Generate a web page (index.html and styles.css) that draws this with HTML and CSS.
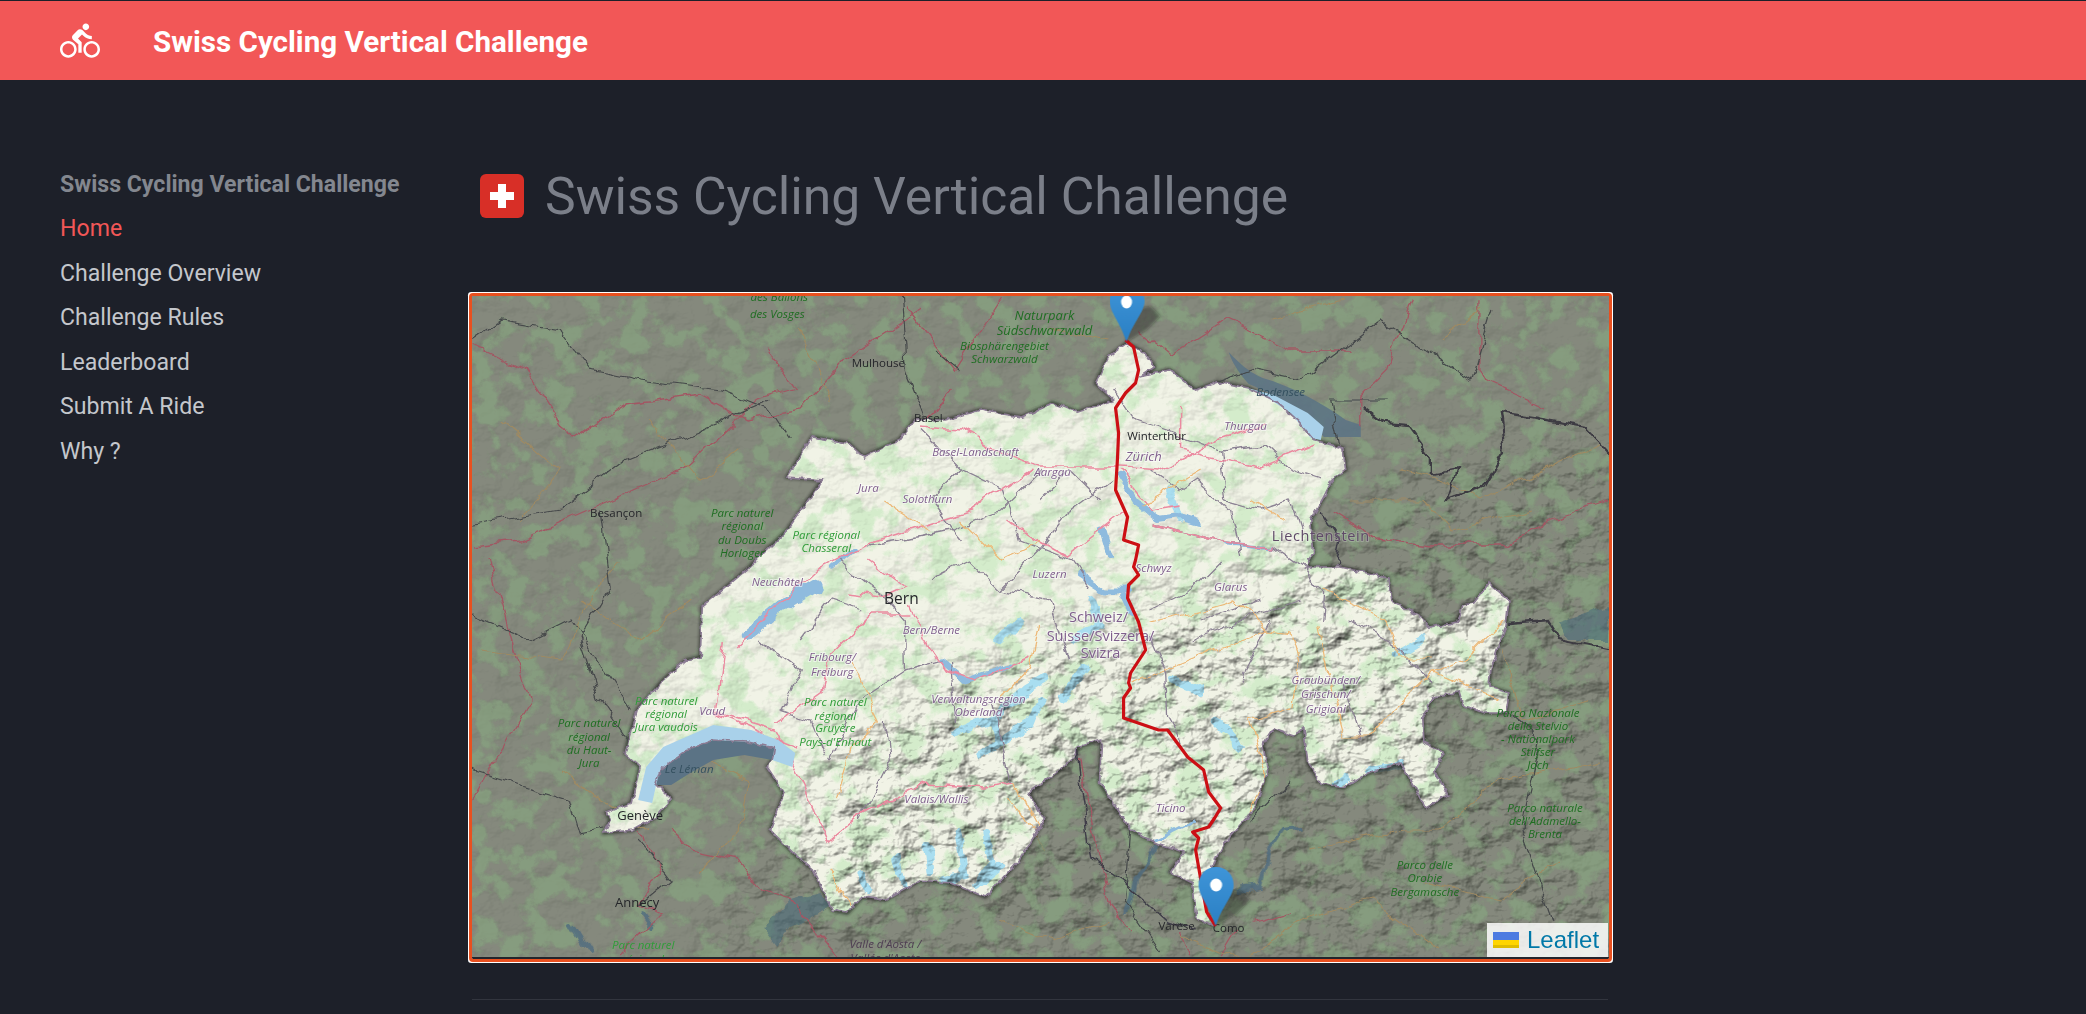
FILE: index.html
```html
<!DOCTYPE html>
<html lang="en">
<head>
<meta charset="utf-8">
<title>Swiss Cycling Vertical Challenge</title>
<link rel="stylesheet" href="styles.css">
</head>
<body>
<header class="topbar">
  <svg class="bike" viewBox="0 0 24 24" aria-hidden="true"><path d="M15.5 5.5c1.1 0 2-.9 2-2s-.9-2-2-2-2 .9-2 2 .9 2 2 2zM5 12c-2.8 0-5 2.2-5 5s2.2 5 5 5 5-2.2 5-5-2.2-5-5-5zm0 8.5c-1.9 0-3.5-1.6-3.5-3.5s1.6-3.5 3.5-3.5 3.5 1.6 3.5 3.5-1.6 3.5-3.5 3.5zm5.8-10l2.4-2.4.8.8c1.3 1.3 3 2.1 5.1 2.1V9c-1.5 0-2.7-.6-3.6-1.5l-1.9-1.9c-.5-.4-1-.6-1.6-.6s-1.1.2-1.4.6L7.8 8.4c-.4.4-.6.9-.6 1.4 0 .6.2 1.1.6 1.4L11 14v5h2v-6.2l-2.2-2.3zM19 12c-2.8 0-5 2.2-5 5s2.2 5 5 5 5-2.2 5-5-2.2-5-5-5zm0 8.5c-1.9 0-3.5-1.6-3.5-3.5s1.6-3.5 3.5-3.5 3.5 1.6 3.5 3.5-1.6 3.5-3.5 3.5z"/></svg>
  <span class="brand">Swiss Cycling Vertical Challenge</span>
</header>
<div class="layout">
  <nav class="sidebar">
    <div class="side-title">Swiss Cycling Vertical Challenge</div>
    <a class="side-link active" href="#">Home</a>
    <a class="side-link" href="#">Challenge Overview</a>
    <a class="side-link" href="#">Challenge Rules</a>
    <a class="side-link" href="#">Leaderboard</a>
    <a class="side-link" href="#">Submit A Ride</a>
    <a class="side-link" href="#">Why ?</a>
  </nav>
  <main class="content">
    <h1 class="page-title">
      <svg class="flag" viewBox="0 0 44 44" aria-hidden="true"><rect width="44" height="44" rx="6" fill="#d82f27"/><path d="M18 10h8v8h8v8h-8v8h-8v-8h-8v-8h8z" fill="#fff"/></svg>
      <span>Swiss Cycling Vertical Challenge</span>
    </h1>
    <div class="map">
      <svg class="map-art" viewBox="472 296 1136 661" preserveAspectRatio="none" aria-label="Map of Switzerland">
        <defs>
          <filter id="forest" filterUnits="userSpaceOnUse" x="472" y="296" width="1136" height="661">
            <feTurbulence type="fractalNoise" baseFrequency="0.04" numOctaves="6" seed="7"/>
            <feColorMatrix values="0 0 0 0 0.66  0 0 0 0 0.84  0 0 0 0 0.60  7 0 0 0 -3.4"/>
          </filter>
          <filter id="forestDark" filterUnits="userSpaceOnUse" x="472" y="296" width="1136" height="661">
            <feTurbulence type="fractalNoise" baseFrequency="0.04" numOctaves="6" seed="7"/>
            <feColorMatrix values="0 0 0 0 0.27  0 0 0 0 0.40  0 0 0 0 0.24  7 0 0 0 -3.4"/>
          </filter>
          <filter id="hill" filterUnits="userSpaceOnUse" x="472" y="296" width="1136" height="661" color-interpolation-filters="sRGB">
            <feTurbulence type="fractalNoise" baseFrequency="0.03 0.042" numOctaves="5" seed="21"/>
            <feDiffuseLighting surfaceScale="6.500" diffuseConstant="1.2" lighting-color="#ffffff">
              <feDistantLight azimuth="225" elevation="55"/>
            </feDiffuseLighting>
          </filter>
          <filter id="wiggle" filterUnits="userSpaceOnUse" x="460" y="284" width="1160" height="685">
            <feTurbulence type="fractalNoise" baseFrequency="0.045" numOctaves="3" seed="3" result="n"/>
            <feDisplacementMap in="SourceGraphic" in2="n" scale="13" xChannelSelector="R" yChannelSelector="G"/>
          </filter>
          <filter id="edge" filterUnits="userSpaceOnUse" x="460" y="284" width="1160" height="685">
            <feTurbulence type="fractalNoise" baseFrequency="0.13" numOctaves="2" seed="9" result="n"/>
            <feDisplacementMap in="SourceGraphic" in2="n" scale="6" xChannelSelector="R" yChannelSelector="G"/>
          </filter>
          <filter id="soft"><feGaussianBlur stdDeviation="1.4"/></filter>
          <filter id="softer"><feGaussianBlur stdDeviation="32"/></filter>
          <path id="ch" d="M631 803 640 767 625 753 629 737 637 710 663 680 686 660 700 657 702 607 746 570 787 530 822 480 787 477 812 437 848 443 863 457 899 440 914 420 945 420 980 410 1021 417 1052 403 1077 412 1113 400 1095 383 1108 357 1126 343 1144 353 1154 367 1139 377 1169 370 1195 390 1217 382 1247 388 1273 400 1297 420 1313 440 1342 448 1345 470 1333 477 1323 497 1310 520 1313 553 1305 567 1340 567 1387 578 1390 600 1420 617 1428 627 1457 622 1462 605 1473 603 1488 583 1508 600 1505 627 1497 647 1490 670 1488 687 1508 693 1505 713 1483 713 1462 705 1458 692 1433 697 1422 717 1423 743 1443 753 1433 770 1447 795 1425 808 1410 780 1400 763 1367 773 1343 788 1320 783 1307 763 1303 728 1293 735 1273 728 1262 745 1267 770 1255 807 1224 843 1216 857 1208 880 1205 910 1212 925 1196 918 1192 883 1169 872 1184 852 1155 843 1130 830 1099 783 1101 740 1077 747 1071 760 1050 777 1029 793 1044 820 1017 863 985 897 950 883 920 880 885 900 862 897 847 913 832 910 813 870 795 855 770 830 784 793 767 767 772 760 774 748 748 742 713 740 686 750 660 770 656 783 671 798 656 817 633 830 604 833 610 820 606 813z"/>
          <mask id="alps" maskUnits="userSpaceOnUse" x="472" y="296" width="1136" height="661">
            <rect x="472" y="296" width="1136" height="661" fill="#303030"/>
            <path d="M700 960 860 720 1100 620 1310 560 1400 470 1620 430 1620 960z" fill="#fff" filter="url(#softer)"/>
          </mask>
          <mask id="outside" maskUnits="userSpaceOnUse" x="472" y="296" width="1136" height="661">
            <rect x="472" y="296" width="1136" height="661" fill="#fff"/>
            <use href="#ch" fill="#000" filter="url(#edge)"/>
          </mask>
          <linearGradient id="pinFill" x1="0" y1="0" x2="0" y2="1">
            <stop offset="0" stop-color="#3f95d8"/>
            <stop offset="1" stop-color="#2a7fc4"/>
          </linearGradient>
        </defs>

        <!-- base cartography, shared by the whole map -->
        <rect class="land" x="472" y="296" width="1136" height="661"/>
        <rect x="472" y="296" width="1136" height="661" filter="url(#forest)"/>
        <g class="glacier" filter="url(#wiggle)">
          <path d="M954 733 990 720 1025 690 1042 680M990 720 1000 745 1030 725 1040 700M980 755 1010 740M1060 700 1075 680 1085 668"/>
          <path d="M862 877 868 890M897 860 903 885M927 847 930 872M958 832 965 875 945 878M985 832 992 862 975 885 1000 865"/>
          <path d="M1400 763 1370 770M1345 780 1335 785M1420 640 1395 655"/>
          <path d="M1172 680 1200 690M1215 720 1240 745M1000 640 1020 620"/>
          <path d="M1170 490 1180 520M1075 640 1100 625 1092 600"/>
        </g>
        <rect class="shade-blend" x="472" y="296" width="1136" height="661" filter="url(#hill)" mask="url(#alps)"/>

        <g filter="url(#wiggle)">
          <g class="lakes">
            <path class="w6" d="M1118 477 1133 500 1157 520 1180 517 1200 523"/>
            <path class="w3" d="M1225 544 1272 548"/>
            <path class="w7" d="M1102 530 1110 557"/>
            <path class="w7" d="M1077 573 1103 590 1128 590M1123 597 1130 612"/>
            <path class="w12" d="M746 636 790 600 815 585"/>
            <path class="w5" d="M830 570 855 548"/>
            <path class="w5" d="M940 660 965 681 1010 665"/>
            <path class="w3" d="M1155 840 1192 822"/>
          </g>
          <g class="canton">
            <path d="M1115 390 1135 420 1220 450 1263 445 1290 470 1320 480"/>
            <path d="M1220 450 1225 500 1260 510 1290 500 1300 530"/>
            <path d="M1150 470 1180 490 1195 480 1230 510 1240 555"/>
            <path d="M1153 525 1223 543 1273 548 1300 567 1322 593 1320 623"/>
            <path d="M1150 640 1165 673 1167 717 1187 753"/>
            <path d="M1150 610 1190 590 1220 560M1190 640 1240 620 1300 600"/>
            <path d="M920 430 960 470 1002 490 1020 540 1070 560 1090 590"/>
            <path d="M868 545 900 540 950 530 1000 510 1040 470"/>
            <path d="M840 560 884 597 904 620 905 670 860 700 830 760"/>
            <path d="M930 580 970 560 1000 590 1050 600 1070 660"/>
            <path d="M1000 590 1040 550 1070 510 1110 480"/>
            <path d="M760 640 800 670 780 710 810 720 825 755"/>
            <path d="M885 720 890 760 860 820M905 670 940 660"/>
            <path d="M990 700 1012 782M950 660 955 720"/>
            <path d="M1200 620 1260 600M1270 620 1240 680"/>
            <path d="M1350 620 1400 650 1430 680M1340 680 1360 740"/>
            <path d="M960 470 930 500 960 540M1040 500 1070 470 1100 500M860 610 830 600 800 640"/>
          </g>
          <g class="road">
            <path d="M919 427 960 430 1001 453 1037 467 1118 467 1160 470 1220 440 1265 425"/>
            <path d="M735 647 817 570 868 543 970 510 1031 470"/>
            <path d="M848 593 883 597 904 587 868 560"/>
            <path d="M909 603 929 647 945 670 975 680 1031 657"/>
            <path d="M1006 520 1031 537 1067 557 1123 513"/>
            <path d="M909 613 873 613 832 653 822 690 776 723"/>
            <path d="M725 643 715 713 797 747"/>
            <path d="M1013 782 985 787 927 783 885 803 858 817 828 842 813 807 797 773 775 730 715 712"/>
            <path d="M1153 525 1223 543 1273 548"/>
            <path d="M1180 405 1180 450 1260 468 1315 445"/>
            <path d="M1118 470 1150 510 1180 505"/>
          </g>
          <g class="road-minor">
            <path d="M1248 720 1293 707 1300 660 1292 633 1267 630 1190 660 1133 683"/>
            <path d="M1317 627 1323 660 1343 737 1370 737 1393 710 1433 673 1467 687 1497 698"/>
            <path d="M1433 673 1467 657 1503 620"/>
            <path d="M1323 590 1383 617 1400 657 1427 657"/>
            <path d="M1248 720 1265 780 1245 820"/>
            <path d="M1150 622 1200 610 1235 600 1267 630"/>
            <path d="M850 660 880 720 850 750 835 800"/>
            <path d="M1000 700 1030 670 1040 625M1045 850 1010 800"/>
            <path d="M1140 505 1200 470M1250 500 1285 520"/>
            <path d="M830 870 850 905M1013 782 1040 830"/>
            <path d="M960 520 1000 560 1040 540M880 500 930 530"/>
          </g>
        </g>

        <!-- dark veil outside Switzerland -->
        <rect class="veil" x="472" y="296" width="1136" height="661" mask="url(#outside)"/>
        <g mask="url(#outside)">
          <rect class="forest-out" x="472" y="296" width="1136" height="661" filter="url(#forestDark)"/>
          <use href="#ch" class="ch-shadow" filter="url(#soft)"/>
          <g class="lakes-out" filter="url(#wiggle)">
            <path class="w4" d="M1126 913 1135 880 1155 847"/>
            <path class="w4" d="M1237 890 1261 887 1271 847 1282 830 1300 828"/>
            <path class="w4" d="M642 913 652 927"/>
            <path class="w4" d="M571 923 589 953"/>
          </g>
          <path class="glacier-dark" filter="url(#wiggle)" d="M763 930 790 900 820 892 834 905 790 925 775 945z"/>
          <path class="glacier-dark" filter="url(#wiggle)" d="M1557 623 1607 605 1607 640 1570 640z"/>
          <path class="lake-dark out" d="M1228 352C1240 365 1250 373 1262 378 1290 386 1320 402 1345 420L1360 425 1360 437 1323 437C1315 425 1307 417 1300 412 1280 398 1262 390 1248 384 1240 376 1232 364 1228 352z"/>
          <g filter="url(#wiggle)">
            <g class="road-out">
              <path d="M472 345 525 370 570 440 625 405 700 395 745 420 800 410 845 360 920 310"/>
              <path d="M472 545 520 540 600 505 690 465 755 400 795 388 770 350"/>
              <path d="M490 560 515 650 530 700 472 800"/>
              <path d="M905 305 955 370 1000 300M950 390 925 420"/>
              <path d="M1333 513 1377 540 1433 545 1507 545 1547 520 1607 500"/>
              <path d="M1360 427 1360 397 1387 370 1410 300"/>
              <path d="M1477 300 1477 367 1483 380 1543 407"/>
              <path d="M1140 330 1170 355 1225 320 1290 350 1350 350"/>
              <path d="M640 830 660 870 640 905 660 915 620 955"/>
              <path d="M670 830 690 850 740 860 760 890 790 900 840 957"/>
              <path d="M1180 932 1190 957M1235 932 1220 957M1255 925 1290 915"/>
              <path d="M1080 760 1100 860 1110 905 1130 930"/>
            </g>
            <g class="orange-out">
              <path d="M1400 470 1440 480 1480 500 1540 470 1600 445"/>
              <path d="M1350 500 1420 500 1450 530 1530 510"/>
              <path d="M1500 650 1520 720 1590 700"/>
              <path d="M700 870 740 830 750 780 700 760"/>
              <path d="M560 770 600 800 650 830"/>
              <path d="M1000 920 1050 940 1110 920M1180 935 1240 960 1300 920 1370 900 1440 950"/>
              <path d="M1310 850 1400 830 1440 830 1500 780 1600 760"/>
              <path d="M1420 880 1500 900 1560 860"/>
              <path d="M480 650 560 660 590 600 620 560"/>
              <path d="M1050 330 1110 340M1270 320 1340 300M1440 340 1480 310"/>
              <path d="M500 420 560 470 520 520M650 420 700 480 740 450M800 330 830 400M580 600 640 640 690 600"/>
            </g>
            <g class="border-out">
              <path d="M472 340 500 320 560 330 590 370 640 380 720 390 770 410 790 440"/>
              <path d="M472 525 560 510 625 460 700 430 770 400"/>
              <path d="M600 510 610 590 580 640 600 700 640 760"/>
              <path d="M472 615 530 640 570 620 630 710"/>
              <path d="M900 296 905 370 925 420M935 350 960 370"/>
              <path d="M1300 440 1340 450 1330 400 1390 400"/>
              <path d="M1130 830 1125 900 1160 950M1250 820 1290 780"/>
              <path d="M1507 713 1540 740 1520 830 1550 920"/>
              <path d="M1170 400 1250 370 1300 380 1380 320 1470 380 1490 310"/>
              <path d="M605 830 580 835 570 800 472 770M640 840 670 880 640 905"/>
            </g>
            <path class="border-thick" d="M1363 408 1383 423 1407 425 1430 457 1430 475 1457 470 1447 500 1483 487 1503 453 1498 412 1530 417 1583 427 1607 453"/>
            <path class="border-thick" d="M1507 623 1547 620 1560 640 1607 650"/>
            <path class="border-mid" d="M1320 510 1340 540 1335 565"/>
            <path class="border-mid" d="M1077 747 1090 860 1120 880 1165 920 1196 930"/>
          </g>
        </g>
        <path class="lake-dark" d="M656 785 660 770 686 750 713 740 748 742 774 748 772 760 744 755 713 760 690 773 671 785z"/>
        <path class="lake-light" d="M652 803 638 800 646 767 663 747 713 725 751 730 778 740 795 753 792 767 772 760 774 748 748 742 713 740 686 750 660 770 656 785z"/>
        <path class="lake-light" d="M1247 388 1273 395 1307 413 1323 427 1320 440 1310 438 1290 413 1267 398z"/>

        <g filter="url(#edge)"><use href="#ch" class="ch-outline"/></g>

        <g class="label green">
          <text x="779" y="301">des Ballons</text>
          <text x="777" y="318">des Vosges</text>
          <text x="1044" y="320" class="lg">Naturpark</text>
          <text x="1044" y="335" class="lg">Südschwarzwald</text>
          <text x="1004" y="350">Biosphärengebiet</text>
          <text x="1004" y="363">Schwarzwald</text>
          <text x="742" y="517">Parc naturel</text>
          <text x="742" y="530">régional</text>
          <text x="742" y="544">du Doubs</text>
          <text x="742" y="557">Horloger</text>
          <text x="826" y="539" class="bright">Parc régional</text>
          <text x="826" y="552" class="bright">Chasseral</text>
          <text x="666" y="705" class="bright">Parc naturel</text>
          <text x="666" y="718" class="bright">régional</text>
          <text x="666" y="731" class="bright">Jura vaudois</text>
          <text x="589" y="727">Parc naturel</text>
          <text x="589" y="741">régional</text>
          <text x="589" y="754">du Haut-</text>
          <text x="589" y="767">Jura</text>
          <text x="835" y="706" class="bright">Parc naturel</text>
          <text x="835" y="720" class="bright">régional</text>
          <text x="835" y="732" class="bright">Gruyère</text>
          <text x="835" y="746" class="bright">Pays-d'Enhaut</text>
          <text x="643" y="949" class="bright">Parc naturel</text>
          <text x="643" y="963" class="bright">régional</text>
          <text x="1537" y="717">Parco Nazionale</text>
          <text x="1537" y="730">dello Stelvio</text>
          <text x="1537" y="743">- Nationalpark</text>
          <text x="1537" y="756">Stilfser</text>
          <text x="1537" y="769">Joch</text>
          <text x="1544" y="812">Parco naturale</text>
          <text x="1544" y="825">dell'Adamello-</text>
          <text x="1544" y="838">Brenta</text>
          <text x="1424" y="869">Parco delle</text>
          <text x="1424" y="882">Orobie</text>
          <text x="1424" y="896">Bergamasche</text>
        </g>
        <g class="label admin">
          <text x="975" y="456">Basel-Landschaft</text>
          <text x="1052" y="476">Aargau</text>
          <text x="1245" y="430">Thurgau</text>
          <text x="868" y="492">Jura</text>
          <text x="927" y="503">Solothurn</text>
          <text x="777" y="586">Neuchâtel</text>
          <text x="931" y="634">Bern/Berne</text>
          <text x="832" y="661">Fribourg/</text>
          <text x="832" y="676">Freiburg</text>
          <text x="712" y="715">Vaud</text>
          <text x="978" y="703">Verwaltungsregion</text>
          <text x="978" y="716">Oberland</text>
          <text x="1049" y="578">Luzern</text>
          <text x="1143" y="461" class="lg">Zürich</text>
          <text x="1153" y="572">Schwyz</text>
          <text x="1230" y="591">Glarus</text>
          <text x="1170" y="812">Ticino</text>
          <text x="1325" y="684">Graubünden/</text>
          <text x="1325" y="698">Grischun/</text>
          <text x="1325" y="713">Grigioni</text>
          <text x="936" y="803">Valais/Wallis</text>
          <text x="885" y="948" class="dim">Valle d'Aosta /</text>
          <text x="885" y="962" class="dim">Vallée d'Aoste</text>
          <text x="1098" y="622" class="big">Schweiz/</text>
          <text x="1100" y="641" class="big">Suisse/Svizzera/</text>
          <text x="1100" y="658" class="big">Svizra</text>
          <text x="1320" y="541" class="big wide">Liechtenstein</text>
        </g>
        <g class="label city">
          <text x="878" y="367">Mulhouse</text>
          <text x="928" y="422">Basel</text>
          <text x="616" y="517">Besançon</text>
          <text x="1156" y="440">Winterthur</text>
          <text x="901" y="604" class="huge">Bern</text>
          <text x="640" y="820" class="mid">Genève</text>
          <text x="637" y="907" class="mid">Annecy</text>
          <text x="1176" y="930">Varese</text>
          <text x="1228" y="932">Como</text>
        </g>
        <g class="label water">
          <text x="689" y="773">Le Léman</text>
          <text x="1280" y="396">Bodensee</text>
        </g>

        <polyline class="route" points="1125 340 1133 347 1138 370 1135 383 1125 393 1115 408 1118 433 1117 457 1115 490 1127 517 1123 540 1138 545 1135 560 1133 567 1138 575 1128 585 1127 598 1138 622 1145 650 1130 673 1128 683 1130 688 1123 698 1123 718 1158 730 1167 730 1187 757 1203 770 1208 792 1220 808 1214 818 1208 827 1192 832 1198 838 1195 850 1199 873 1206 912 1215 926"/>

        <g class="marker-shadow" filter="url(#soft)">
          <path d="M1126 342 1146 330 1160 316 1150 306 1140 308 1126 325z"/>
          <path d="M1215 926 1236 914 1250 900 1240 890 1230 892 1215 908z"/>
        </g>
        <path class="pin" d="M1126 342C1119 321 1109 312 1109 301 1109 291 1116 283 1126.500 283 1137 283 1144 291 1144 301 1144 312 1133 321 1126 342z"/>
        <ellipse class="pin-dot" cx="1126" cy="302" rx="5.500" ry="6.500"/>
        <path class="pin" d="M1215 926C1208 905 1198 896 1198 885 1198 875 1205 867 1215.500 867 1226 867 1233 875 1233 885 1233 896 1222 905 1215 926z"/>
        <ellipse class="pin-dot" cx="1215.500" cy="885" rx="6" ry="6.500"/>
      </svg>
      <div class="attribution">
        <svg class="ua" viewBox="0 0 26 16" aria-hidden="true"><rect width="26" height="8" fill="#4c7be1"/><rect y="8" width="26" height="5" fill="#ffd500"/><rect y="13" width="26" height="3" fill="#e0bc00"/></svg>
        <a class="attr-link" href="#">Leaflet</a>
      </div>
    </div>
    <hr class="rule">
  </main>
</div>
</body>
</html>
```

FILE: styles.css
```css
* { box-sizing: border-box; }
html, body { height: 100%; }
body {
  margin: 0;
  background: #1d2029;
  font-family: Roboto, "Liberation Sans", sans-serif;
  overflow: hidden;
}
.topbar {
  height: 80px;
  background: #f25757;
  border-top: 1px solid #1d2029;
  display: flex;
  align-items: center;
  padding-left: 60px;
  gap: 53px;
}
.bike { width: 40px; height: 40px; fill: #fff; flex: none; }
.brand { color: #fff; font-size: 29.6px; font-weight: 700; position: relative; top: 1px; }
.layout { display: flex; }
.sidebar {
  width: 472px;
  flex: none;
  padding: 92px 0 0 60px;
  display: flex;
  flex-direction: column;
}
.side-title {
  color: #83878f;
  font-size: 23.1px;
  font-weight: 700;
  line-height: 26px;
  margin-bottom: 18px;
}
.side-link {
  color: #c4c7cc;
  font-size: 23.1px;
  line-height: 26px;
  margin-bottom: 18.6px;
  text-decoration: none;
}
.side-link.active { color: #f25757; }
.content { width: 1137px; flex: none; }
.page-title {
  margin: 85px 0 0 8px;
  height: 131px;
  display: flex;
  align-items: flex-start;
  gap: 21px;
  color: #7b7f89;
  font-size: 51.6px;
  font-weight: 400;
  line-height: 64px;
}
.flag { width: 44px; height: 44px; flex: none; margin-top: 9px; }
.map {
  position: relative;
  height: 663px;
  padding-bottom: 2px;
  background: #23252c;
  outline: 3px solid #e8501f;
  box-shadow: 0 0 0 4px #fff;
  border-radius: 1px;
}
.map-art { display: block; width: 100%; height: 100%; filter: blur(.35px); }
.attribution {
  position: absolute;
  right: 1px;
  bottom: 2px;
  width: 121px;
  height: 34px;
  background: rgba(255, 255, 255, .84);
  display: flex;
  align-items: center;
  padding-left: 6px;
  gap: 8px;
}
.ua { width: 26px; height: 16px; flex: none; }
.attr-link {
  color: #0078a8;
  font-family: "Liberation Sans", Arial, sans-serif;
  font-size: 24px;
  text-decoration: none;
}
.rule { margin: 40px 1px 0 0; border: 0; border-top: 1px solid #32353e; }

/* map paint */
.land { fill: #f1f3e6; }
.shade-blend { mix-blend-mode: multiply; }
.veil { fill: #494e43; opacity: .64; }
.forest-out { opacity: .62; }
.ch-shadow { fill: none; stroke: #1b1a1f; stroke-width: 3.5; opacity: .7; }
.ch-outline { fill: none; stroke: #8b7b93; stroke-width: 1.7; }
.glacier path { fill: none; stroke: #a9def0; stroke-width: 8; stroke-linecap: round; stroke-linejoin: round; }
.lakes path { fill: none; stroke: #8fbbde; stroke-linecap: round; stroke-linejoin: round; }
.lakes-out path { fill: none; stroke: #4f6b80; opacity: .8; stroke-linecap: round; stroke-linejoin: round; }
.w3 { stroke-width: 3; }
.w4 { stroke-width: 4; }
.w5 { stroke-width: 5; }
.w6 { stroke-width: 6; }
.w7 { stroke-width: 7; }
.w12 { stroke-width: 13; }
.canton path { fill: none; stroke: #8b8193; stroke-width: 1.3; }
.road path { fill: none; stroke: #eb8aa0; stroke-width: 1.5; }
.road-minor path { fill: none; stroke: #edb877; stroke-width: 1.2; }
.road-out path { fill: none; stroke: #a25763; stroke-width: 1.3; }
.orange-out path { fill: none; stroke: #9f8a62; stroke-width: 1.1; }
.border-out path { fill: none; stroke: #45484a; stroke-width: 1.2; }
.border-thick { fill: none; stroke: #3c3a42; stroke-width: 2.3; }
.border-mid { fill: none; stroke: #3f3e48; stroke-width: 1.5; }
.glacier-dark { fill: #41667a; opacity: .5; }
.lake-dark { fill: #5b7385; }
.lake-dark.out { opacity: .85; }
.lake-light { fill: #a9d1ea; }

.label text { font-family: "Open Sans", "Noto Sans", sans-serif; font-size: 11.5px; text-anchor: middle; }
.green text { fill: #1f6e22; font-style: italic; }
.green .bright { fill: #2f9c38; }
.green .lg { font-size: 13px; }
.admin text { fill: #7f5f8c; font-style: italic; paint-order: stroke; stroke: rgba(255, 255, 255, .55); stroke-width: 2px; }
.admin .lg { font-size: 13px; }
.admin .dim { fill: #4e3e52; stroke: none; }
.admin .big { font-style: normal; font-size: 14.5px; }
.admin .wide { letter-spacing: .6px; fill: #5f4a68; stroke: rgba(255, 255, 255, .2); }
.city text { fill: #25262a; }
.city .mid { font-size: 13px; }
.city .huge { font-size: 15.500px; }
.water text { fill: #34505f; font-style: italic; font-size: 11.5px; }

.route { fill: none; stroke: #cc0f14; stroke-width: 3.2; stroke-linejoin: round; }
.marker-shadow path { fill: #1a1813; opacity: .4; }
.pin { fill: url(#pinFill); }
.pin-dot { fill: #fff; }
```
